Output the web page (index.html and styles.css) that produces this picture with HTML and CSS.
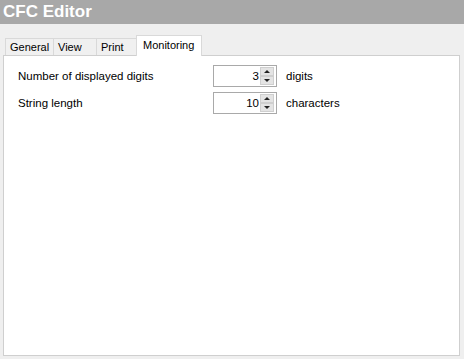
FILE: index.html
```html
<!DOCTYPE html>
<html lang="en">
<head>
  <meta charset="UTF-8" />
  <title>CFC Editor</title>
  <link rel="stylesheet" href="styles.css">
</head>
<body>
  <div class="titlebar">CFC Editor</div>

  <div class="tabs">
    <div class="tab general">General</div>
    <div class="tab view">View</div>
    <div class="tab print">Print</div>
    <div class="tab active">Monitoring</div>
  </div>

  <div class="panel">
    <div class="row">
      <div class="label">Number of displayed digits</div>
      <div class="spin">
        <input type="text" value="3">
        <div class="arrows">
          <span class="up"></span>
          <span class="down"></span>
        </div>
      </div>
      <div class="unit">digits</div>
    </div>
    <div class="row">
      <div class="label">String length</div>
      <div class="spin">
        <input type="text" value="10">
        <div class="arrows">
          <span class="up"></span>
          <span class="down"></span>
        </div>
      </div>
      <div class="unit">characters</div>
    </div>
  </div>
</body>
</html>
```

FILE: styles.css
```css
* {
  box-sizing: border-box;
}

html, body {
  margin: 0;
  padding: 0;
}

body {
  width: 464px;
  height: 359px;
  background: #efefef;
  font-family: 'Liberation Sans', sans-serif;
  font-size: 11.5px;
  color: #000;
  overflow: hidden;
}

.titlebar {
  height: 24px;
  background: #a8a8a8;
  color: white;
  font-weight: bold;
  font-size: 17px;
  line-height: 24px;
  padding-left: 3px;
}

.tabs {
  display: flex;
  align-items: flex-end;
  height: 31px;
  padding-left: 5px;
}

.tab {
  height: 17px;
  line-height: 17px;
  padding: 0 0 0 4px;
  border: 1px solid #d9d9d9;
  border-right: none;
  border-bottom: none;
  background: #f0f0f0;
  font-size: 11px;
  white-space: nowrap;
  overflow: hidden;
}

.tab.general { width: 48px; }
.tab.view { width: 43px; }
.tab.print { width: 40px; }

.tab.active {
  width: 66px;
  height: 21px;
  line-height: 18px;
  padding-left: 6px;
  background: white;
  border: 1px solid #d9d9d9;
  border-bottom: none;
  margin-bottom: -1px;
  position: relative;
  z-index: 1;
}

.panel {
  margin: 0 4px 0 3px;
  height: 301px;
  background: white;
  border: 1px solid #cfcfcf;
  padding: 9px 0 0 14px;
}

.row {
  display: flex;
  align-items: center;
  height: 22px;
  margin-bottom: 5px;
}

.label {
  width: 195px;
}

.spin {
  display: flex;
  width: 64px;
  height: 22px;
  border: 1px solid #a9a9a9;
  background: white;
}

.spin input {
  width: 46px;
  border: none;
  padding: 0 1px 0 0;
  text-align: right;
  font: inherit;
  outline: none;
}

.arrows {
  display: flex;
  flex-direction: column;
  width: 14px;
  margin: 1px 1px 1px 0;
}

.arrows span {
  flex: 1;
  background: #e4e4e4;
  border: 1px solid #cfcfcf;
  display: flex;
  align-items: center;
  justify-content: center;
}

.arrows .up::after {
  content: '';
  border-left: 3px solid transparent;
  border-right: 3px solid transparent;
  border-bottom: 3px solid #222;
}

.arrows .down::after {
  content: '';
  border-left: 3px solid transparent;
  border-right: 3px solid transparent;
  border-top: 3px solid #222;
}

.unit {
  margin-left: 9px;
}
```
